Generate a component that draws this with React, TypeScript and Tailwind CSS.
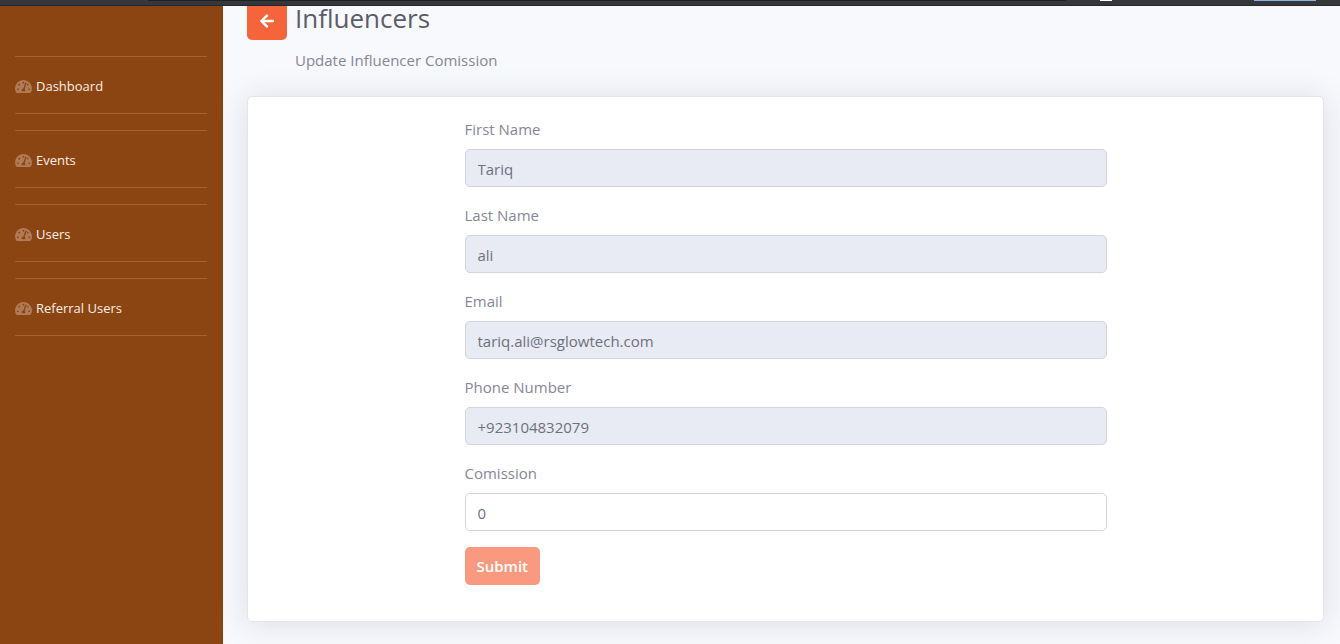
import { FaArrowLeft, FaTachometerAlt } from "react-icons/fa";

const navItems = ["Dashboard", "Events", "Users", "Referral Users"];

const fields = [
  { id: "firstName", label: "First Name", value: "Tariq", disabled: true },
  { id: "lastName", label: "Last Name", value: "ali", disabled: true },
  { id: "email", label: "Email", value: "tariq.ali@rsglowtech.com", disabled: true },
  { id: "phone", label: "Phone Number", value: "+923104832079", disabled: true },
  { id: "comission", label: "Comission", value: "0", disabled: false },
];

function TopStrip() {
  return (
    <div className="flex h-1.5 items-start border-b border-[#26262b] bg-[#36373a]">
      <div className="ml-[148px] h-px w-[918px] bg-[#202124]" />
      <div className="ml-[34px] h-px w-3 bg-white" />
      <div className="mr-6 ml-auto h-px w-[62px] bg-[#8ab4e8]" />
    </div>
  );
}

function Sidebar() {
  return (
    <aside className="w-[223px] shrink-0 bg-[#8b4513] px-[15px] pt-[50px]">
      <nav className="flex flex-col gap-4">
        {navItems.map((item) => (
          <a
            key={item}
            href="#"
            className="mr-px flex h-[58px] items-center gap-1 border-y border-[#a5622f] pt-[3px] text-[13px] text-[#fbeee4]"
          >
            <FaTachometerAlt className="h-[15px] w-[17px] text-[#b27b57]" />
            <span>{item}</span>
          </a>
        ))}
      </nav>
    </aside>
  );
}

export default function App() {
  return (
    <div className="flex min-h-screen flex-col bg-[#f8f9fd] font-['Open_Sans','Noto_Sans',sans-serif] text-[15px] text-[#858796]">
      <TopStrip />
      <div className="flex flex-1">
        <Sidebar />
        <main className="min-w-0 flex-1 pr-4 pb-[22px] pl-6">
          <header className="flex items-start gap-2">
            <button
              type="button"
              aria-label="Back"
              className="flex h-[34px] w-10 items-center justify-center rounded-b-[5px] bg-[#f5643a] pb-1 text-white"
            >
              <FaArrowLeft className="h-4 w-4" />
            </button>
            <div>
              <h1 className="text-[26px] leading-6 text-[#5a5c69]">Influencers</h1>
              <p className="mt-[18px] leading-6">Update Influencer Comission</p>
            </div>
          </header>
          <section className="mt-6 rounded-[5px] border border-[#e4e5ea] bg-white pt-5 pb-9 shadow-[0_2px_32px_rgba(30,30,50,0.13)]">
            <form className="mx-auto w-full max-w-[666px] px-3">
              {fields.map((field) => (
                <div key={field.id} className="mb-4">
                  <label htmlFor={field.id} className="mb-2 block leading-6">
                    {field.label}
                  </label>
                  <input
                    id={field.id}
                    type="text"
                    defaultValue={field.value}
                    disabled={field.disabled}
                    className="block h-[38px] w-full rounded-[5px] border border-[#d1d3e0] bg-white px-3 pt-0.5 text-[#6e707e] disabled:bg-[#e8ebf3]"
                  />
                </div>
              ))}
              <button
                type="submit"
                disabled
                className="h-[38px] rounded-[5px] bg-[#f99a80] px-3 font-semibold text-white"
              >
                Submit
              </button>
            </form>
          </section>
        </main>
      </div>
    </div>
  );
}
